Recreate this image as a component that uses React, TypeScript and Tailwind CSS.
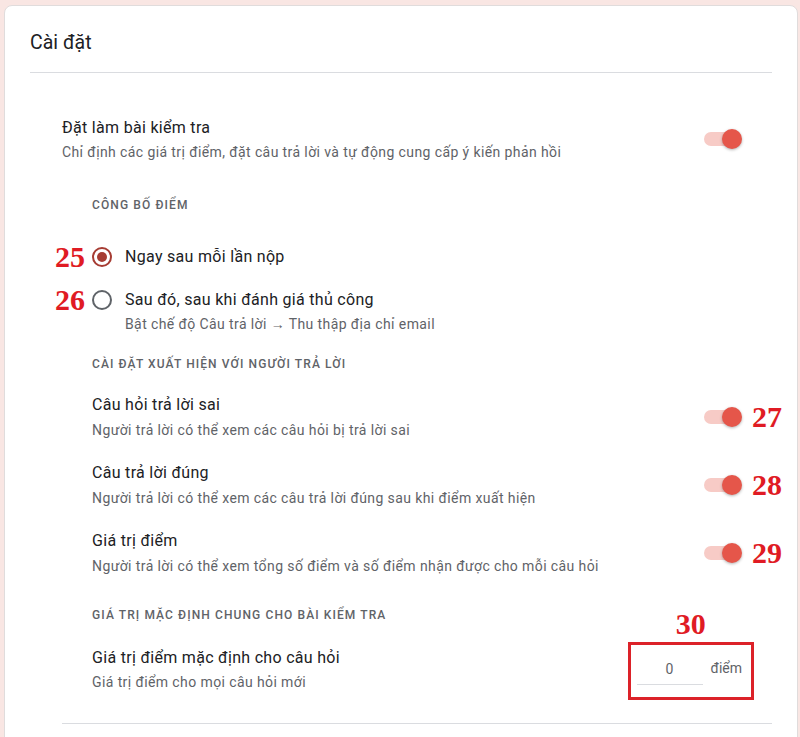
import React from "react";

const font = { fontFamily: "Roboto, 'Noto Sans', Arial, sans-serif" };

function Note({ children, cls }: { children: React.ReactNode; cls: string }) {
  return (
    <span
      className={`${cls} absolute whitespace-nowrap font-['Liberation_Serif',serif] text-[30px] font-bold leading-none text-[#e01b24]`}
    >
      {children}
    </span>
  );
}

function Toggle({ note }: { note?: string }) {
  return (
    <div className="relative mr-[30px] h-[20px] w-[38px] shrink-0">
      <div className="absolute left-0 top-[3px] h-[14px] w-[34px] rounded-full bg-[#f7cbc6]" />
      <div className="absolute right-0 top-0 h-[20px] w-[20px] rounded-full bg-[#e5564a] shadow-[0_1px_3px_rgba(0,0,0,0.3)]" />
      {note && <Note cls="left-full top-1/2 ml-[10px] -translate-y-1/2">{note}</Note>}
    </div>
  );
}

function Label({ children, mt }: { children: React.ReactNode; mt: string }) {
  return (
    <div className={`${mt} text-[12px] font-medium uppercase leading-[16px] tracking-[1.1px] text-[#5f6368]`}>
      {children}
    </div>
  );
}

function Title({ children }: { children: React.ReactNode }) {
  return <div className="text-[16px] leading-[24px] tracking-[0.3px] text-[#202124]">{children}</div>;
}

function Sub({ children, mt = "mt-[2px]" }: { children: React.ReactNode; mt?: string }) {
  return <div className={`${mt} text-[14px] leading-[20px] tracking-[0.4px] text-[#5f6368]`}>{children}</div>;
}

function ToggleRow({ title, sub, note }: { title: string; sub: string; note: string }) {
  return (
    <div className="mt-[21px] flex items-center justify-between">
      <div>
        <Title>{title}</Title>
        <Sub mt="mt-[3px]">{sub}</Sub>
      </div>
      <Toggle note={note} />
    </div>
  );
}

function Radio({ checked, note }: { checked?: boolean; note: string }) {
  return (
    <div className="relative shrink-0">
      <Note cls="right-full top-1/2 mr-[7px] -translate-y-1/2">{note}</Note>
      <div
        className={`flex h-[20px] w-[20px] items-center justify-center rounded-full border-2 ${
          checked ? "border-[#a63c33]" : "border-[#5f6368]"
        }`}
      >
        {checked && <div className="h-[10px] w-[10px] rounded-full bg-[#a63c33]" />}
      </div>
    </div>
  );
}

export default function App() {
  return (
    <div className="min-h-[737px] bg-[#f9e6e3] pl-[4px] pt-[5px]" style={font}>
      <div className="w-[794px] rounded-t-[8px] border border-[#e0dcdc] bg-white px-[25px] pb-[60px]">
        <div className="border-b border-[#dadce0] pb-[15px] pt-[23px] text-[19.5px] leading-[28px] text-[#202124]">
          Cài đặt
        </div>

        <div className="pl-[32px]">
          <div className="mt-[43px] flex items-center justify-between">
            <div>
              <Title>Đặt làm bài kiểm tra</Title>
              <Sub>Chỉ định các giá trị điểm, đặt câu trả lời và tự động cung cấp ý kiến phản hồi</Sub>
            </div>
            <Toggle />
          </div>

          <div className="pl-[30px]">
            <Label mt="mt-[35px]">Công bố điểm</Label>

            <div className="mt-[32px] flex items-center gap-[13px]">
              <Radio checked note="25" />
              <Title>Ngay sau mỗi lần nộp</Title>
            </div>

            <div className="mt-[19px] flex items-start gap-[13px]">
              <div className="pt-[2px]">
                <Radio note="26" />
              </div>
              <div>
                <Title>Sau đó, sau khi đánh giá thủ công</Title>
                <Sub>Bật chế độ Câu trả lời → Thu thập địa chỉ email</Sub>
              </div>
            </div>

            <Label mt="mt-[22px]">Cài đặt xuất hiện với người trả lời</Label>

            <ToggleRow
              title="Câu hỏi trả lời sai"
              sub="Người trả lời có thể xem các câu hỏi bị trả lời sai"
              note="27"
            />
            <ToggleRow
              title="Câu trả lời đúng"
              sub="Người trả lời có thể xem các câu trả lời đúng sau khi điểm xuất hiện"
              note="28"
            />
            <ToggleRow
              title="Giá trị điểm"
              sub="Người trả lời có thể xem tổng số điểm và số điểm nhận được cho mỗi câu hỏi"
              note="29"
            />

            <Label mt="mt-[31px]">Giá trị mặc định chung cho bài kiểm tra</Label>

            <div className="mt-[23px] flex items-center justify-between">
              <div>
                <Title>Giá trị điểm mặc định cho câu hỏi</Title>
                <Sub>Giá trị điểm cho mọi câu hỏi mới</Sub>
              </div>
              <div className="relative mr-[30px] flex items-center gap-[8px]">
                <div className="flex h-[31px] w-[66px] items-end justify-center border-b border-[#dadce0] pb-[5px] text-[14px] leading-[20px] text-[#5f6368]">
                  0
                </div>
                <div className="pb-[2px] text-[14px] leading-[20px] text-[#5f6368]">điểm</div>
                <div className="pointer-events-none absolute -bottom-[15px] -left-[9px] -right-[12px] -top-[12px] border-[3px] border-[#dc2229]">
                  <span className="absolute left-1/2 top-[-36px] -translate-x-1/2 font-['Liberation_Serif',serif] text-[30px] font-bold leading-[30px] text-[#e01b24]">
                    30
                  </span>
                </div>
              </div>
            </div>
          </div>

          <div className="mt-[31px] border-t border-[#dadce0]" />
        </div>
      </div>
    </div>
  );
}
